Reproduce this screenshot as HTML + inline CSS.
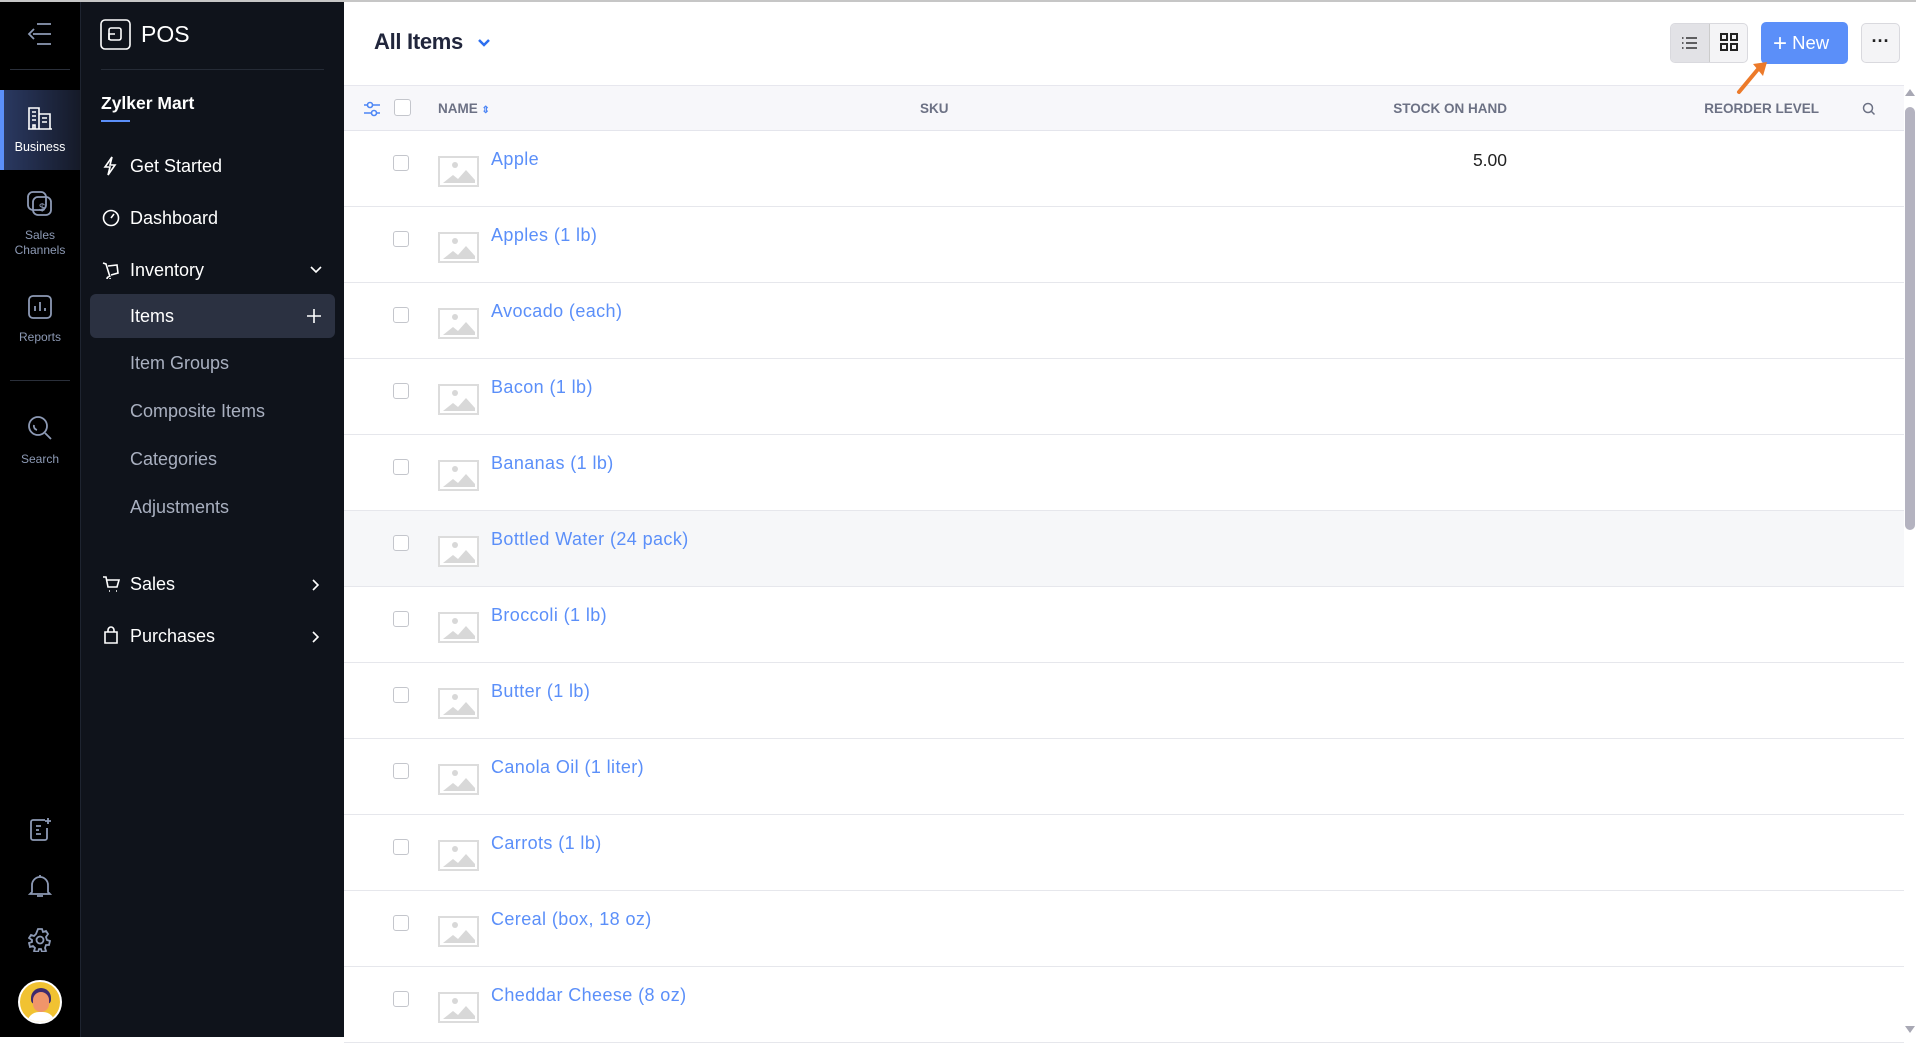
<!DOCTYPE html><html><head><style>
*{box-sizing:border-box;margin:0;padding:0}
body{width:1916px;height:1037px;overflow:hidden;font-family:"Liberation Sans",sans-serif;background:#fff;position:relative}
.a{position:absolute}
.rail{left:0;top:0;width:80px;height:1037px;background:#000}
.side{left:80px;top:0;width:264px;height:1037px;background:#0f131b;border-left:1px solid #1e2430}
.rl{color:#8d9ab5;font-size:12px;text-align:center;width:80px;left:0;line-height:15px}
.nav{left:130px;color:#fff;font-size:18px}
.sub{left:130px;color:#a9b0c0;font-size:18px}
.ic{stroke:#fff;fill:none;stroke-width:1.6}
.ri{stroke:#8d9ab5;fill:none;stroke-width:1.8}
.th{top:101px;font-size:13.5px;font-weight:bold;color:#6c7184}
.row{left:344px;width:1560px;height:76px;border-bottom:1px solid #e6e7ec}
.cb{left:49px;top:24px;width:16px;height:16px;border:1.3px solid #c4c6cc;border-radius:3px;background:#fff}
.img{left:94px;top:25px}
.nm{left:147px;top:18px;color:#5b8ff9;font-size:18px;letter-spacing:0.4px}
</style></head><body>
<div class="a" style="left:0;top:0;width:1916px;height:2px;background:#c6c6c6;z-index:5"></div>
<div class="a rail"></div>
<svg class="a" style="left:27px;top:22px" width="26" height="24" viewBox="0 0 26 24"><path class="ri" d="M10 2h14M6 12h18M10 22h14M7 7l-5 5 5 5" stroke="#aab4c8"/></svg>
<div class="a" style="left:10px;top:69px;width:60px;height:1px;background:#2a2f3a"></div>
<div class="a" style="left:0;top:90px;width:80px;height:80px;background:linear-gradient(90deg,#2b3a64,#151a28)"></div>
<div class="a" style="left:0;top:90px;width:4px;height:80px;background:#5b8ff9"></div>
<svg class="a" style="left:27px;top:105px" width="26" height="26" viewBox="0 0 26 26"><path class="ic" d="M2 24V3h10v21M12 9h11v15M1 24h24M5 7h4M5 11h4M5 15h4M15 13h5M15 17h5M6 24v-4h2v4"/></svg>
<div class="a rl" style="top:140px;color:#fff;font-size:12.5px">Business</div>
<svg class="a" style="left:27px;top:191px" width="26" height="28" viewBox="0 0 26 28"><rect class="ri" x="1" y="1" width="18" height="18" rx="5"/><rect class="ri" x="6" y="6" width="18" height="18" rx="5" fill="#000"/><text x="15" y="20" font-size="11" fill="#8d9ab5" text-anchor="middle" font-family="Liberation Sans">$</text></svg>
<div class="a rl" style="top:228px">Sales<br>Channels</div>
<svg class="a" style="left:28px;top:295px" width="24" height="24" viewBox="0 0 24 24"><rect class="ri" x="1" y="1" width="22" height="22" rx="4"/><path class="ri" d="M7 16v-5M12 16V7M17 16v-3"/></svg>
<div class="a rl" style="top:330px">Reports</div>
<div class="a" style="left:10px;top:380px;width:60px;height:1px;background:#2a2f3a"></div>
<svg class="a" style="left:27px;top:415px" width="26" height="26" viewBox="0 0 26 26"><circle class="ri" cx="11" cy="11" r="9"/><path class="ri" d="M18 18l6 6M7 10a4 4 0 0 0 3 5"/></svg>
<div class="a rl" style="top:452px">Search</div>
<svg class="a" style="left:29px;top:816px" width="24" height="26" viewBox="0 0 24 26"><path class="ri" d="M16 4H4a2 2 0 0 0-2 2v16a2 2 0 0 0 2 2h12a2 2 0 0 0 2-2V12M7 10h5M7 14h3M7 18h5M19 2v6M16 5h6"/></svg>
<svg class="a" style="left:28px;top:873px" width="24" height="26" viewBox="0 0 24 26"><path class="ri" d="M4 19V12a8 8 0 0 1 16 0v7l2 2H2zM12 2v2M9 23h6"/></svg>
<svg class="a" style="left:28px;top:928px" width="24" height="24" viewBox="0 0 24 24"><circle class="ri" cx="12" cy="12" r="3.5"/><path class="ri" d="M10 1h4l1 3 3-1 2 3-2 3 1 3 3 1v0l-1 4-3 0-1 3 1 3-4 1-1-3h-2l-1 3-4-1 1-3-2-2-3 1-1-4 3-1v-2l-3-2 2-3 3 1 2-2z"/></svg>
<div class="a" style="left:18px;top:980px;width:44px;height:44px;border-radius:50%;background:#f1c232;border:2px solid #fff;overflow:hidden">
<div class="a" style="left:11px;top:6px;width:20px;height:16px;border-radius:10px 10px 4px 4px;background:#3e2a6e"></div>
<div class="a" style="left:13px;top:10px;width:16px;height:20px;border-radius:8px;background:#f0956a"></div>
<div class="a" style="left:7px;top:30px;width:28px;height:14px;border-radius:12px 12px 0 0;background:#fff"></div></div>

<div class="a side"></div>
<svg class="a" style="left:100px;top:19px" width="32" height="32" viewBox="0 0 32 32"><rect class="ic" x="1" y="1" width="29" height="29" rx="4"/><rect class="ic" x="9" y="9" width="12" height="12" rx="2"/><path class="ic" d="M15 15h-6v6"/></svg>
<div class="a" style="left:141px;top:21px;color:#fff;font-size:23px">POS</div>
<div class="a" style="left:101px;top:69px;width:223px;height:1px;background:#252b36"></div>
<div class="a" style="left:101px;top:93px;color:#fff;font-size:17.5px;font-weight:bold">Zylker Mart</div>
<div class="a" style="left:101px;top:120px;width:29px;height:2px;background:#5b8ff9"></div>
<svg class="a" style="left:103px;top:156px" width="14" height="20" viewBox="0 0 14 20"><path class="ic" d="M9 1L2 11h5l-2 8 7-10H7z"/></svg>
<div class="a nav" style="top:156px">Get Started</div>
<svg class="a" style="left:102px;top:209px" width="18" height="18" viewBox="0 0 18 18"><circle class="ic" cx="9" cy="9" r="7.5"/><path class="ic" d="M9 9l3-4"/></svg>
<div class="a nav" style="top:208px">Dashboard</div>
<svg class="a" style="left:102px;top:261px" width="18" height="18" viewBox="0 0 18 18"><path class="ic" d="M1 2l3 1 4 13M6 5l9-1 1 8-7 2M7 16a1.5 1.5 0 1 0 1 1"/></svg>
<div class="a nav" style="top:260px">Inventory</div>
<svg class="a" style="left:309px;top:265px" width="14" height="10" viewBox="0 0 14 10"><path class="ic" d="M2 2l5 5 5-5"/></svg>
<div class="a" style="left:90px;top:294px;width:245px;height:44px;background:#2b3141;border-radius:6px"></div>
<div class="a nav" style="top:306px">Items</div>
<svg class="a" style="left:306px;top:308px" width="16" height="16" viewBox="0 0 16 16"><path class="ic" d="M8 1v14M1 8h14"/></svg>
<div class="a sub" style="top:353px">Item Groups</div>
<div class="a sub" style="top:401px">Composite Items</div>
<div class="a sub" style="top:449px">Categories</div>
<div class="a sub" style="top:497px">Adjustments</div>
<svg class="a" style="left:102px;top:575px" width="18" height="18" viewBox="0 0 18 18"><path class="ic" d="M1 2h3l2 10h9l2-7H5M7 16h1M14 16h1"/></svg>
<div class="a nav" style="top:574px">Sales</div>
<svg class="a" style="left:311px;top:578px" width="10" height="14" viewBox="0 0 10 14"><path class="ic" d="M2 2l5 5-5 5"/></svg>
<svg class="a" style="left:103px;top:626px" width="16" height="18" viewBox="0 0 16 18"><path class="ic" d="M2 6h12v11H2zM5 6V4a3 3 0 0 1 6 0v2"/></svg>
<div class="a nav" style="top:626px">Purchases</div>
<svg class="a" style="left:311px;top:630px" width="10" height="14" viewBox="0 0 10 14"><path class="ic" d="M2 2l5 5-5 5"/></svg>

<div class="a" style="left:374px;top:29px;font-size:22px;color:#21263c;font-weight:bold;letter-spacing:-0.3px">All Items</div>
<svg class="a" style="left:477px;top:38px" width="14" height="10" viewBox="0 0 14 10"><path d="M2 2l5 5 5-5" stroke="#2d6ff0" stroke-width="2.5" fill="none"/></svg>
<div class="a" style="left:1670px;top:23px;width:78px;height:40px;border:1px solid #d9d9de;border-radius:5px;background:#f4f4f6;overflow:hidden"><div class="a" style="left:0;top:0;width:39px;height:40px;background:#e2e2e6;border-right:1px solid #ccc"></div></div>
<svg class="a" style="left:1681px;top:35px" width="18" height="16" viewBox="0 0 18 16"><path d="M5 3h11M5 8h11M5 13h11M1 3h1.5M1 8h1.5M1 13h1.5" stroke="#333" stroke-width="1.5"/></svg>
<svg class="a" style="left:1720px;top:33px" width="18" height="18" viewBox="0 0 18 18"><g fill="none" stroke="#222" stroke-width="2"><rect x="1" y="1" width="6" height="6"/><rect x="11" y="1" width="6" height="6"/><rect x="1" y="11" width="6" height="6"/><rect x="11" y="11" width="6" height="6"/></g></svg>
<div class="a" style="left:1761px;top:22px;width:87px;height:42px;background:#5b8ff9;border-radius:5px;color:#fff;font-size:18.5px;line-height:42px;padding-left:12px"><span style="font-size:24px;font-weight:300;vertical-align:-2px">+</span> New</div>
<div class="a" style="left:1861px;top:23px;width:39px;height:40px;border:1px solid #d9d9de;border-radius:5px;background:#f4f4f6;text-align:center;line-height:34px;font-size:18px;font-weight:bold;color:#222">···</div>

<div class="a" style="left:344px;top:85px;width:1560px;height:46px;background:#f7f7fa;border-top:1px solid #e7e7ee;border-bottom:1px solid #e4e5ec"></div>
<svg class="a" style="left:1735px;top:58px;z-index:4" width="36" height="38" viewBox="0 0 36 38"><path d="M4 34L24 10" stroke="#ec7a2a" stroke-width="4" stroke-linecap="round"/><path d="M18 6l14-2-4 14z" fill="#ec7a2a"/></svg>
<svg class="a" style="left:363px;top:101px" width="18" height="16" viewBox="0 0 18 16"><g stroke="#4d86f5" stroke-width="1.6" fill="#fff"><path d="M1 4h16M1 12h16"/><circle cx="7" cy="4" r="2.5"/><circle cx="11" cy="12" r="2.5"/></g></svg>
<div class="a" style="left:394px;top:99px;width:17px;height:17px;border:1.3px solid #c4c6cc;border-radius:3px;background:#fff"></div>
<div class="a th" style="left:438px">NAME <span style="color:#4d86f5;font-size:10px">&#8661;</span></div>
<div class="a th" style="left:920px">SKU</div>
<div class="a th" style="left:1300px;width:207px;text-align:right">STOCK ON HAND</div>
<div class="a th" style="left:1600px;width:219px;text-align:right">REORDER LEVEL</div>
<svg class="a" style="left:1862px;top:102px" width="14" height="14" viewBox="0 0 14 14"><circle cx="6" cy="6" r="4.5" stroke="#6c7184" stroke-width="1.5" fill="none"/><path d="M9.5 9.5l3 3" stroke="#6c7184" stroke-width="1.5"/></svg>

<div id="rows"></div>
<div class="a" style="left:1904px;top:85px;width:12px;height:952px;background:#fff"></div>
<svg class="a" style="left:1905px;top:88px" width="10" height="8"><path d="M0 8L5 1 10 8z" fill="#a8a8b4"/></svg>
<div class="a" style="left:1905px;top:107px;width:10px;height:423px;background:#b4b3c0;border-radius:5px"></div>
<svg class="a" style="left:1905px;top:1026px" width="10" height="8"><path d="M0 0L5 7 10 0z" fill="#a8a8b4"/></svg>
<script>
var n=["Apple","Apples (1 lb)","Avocado (each)","Bacon (1 lb)","Bananas (1 lb)","Bottled Water (24 pack)","Broccoli (1 lb)","Butter (1 lb)","Canola Oil (1 liter)","Carrots (1 lb)","Cereal (box, 18 oz)","Cheddar Cheese (8 oz)"];
var h="";n.forEach(function(t,i){var y=131+i*76;
h+='<div class="a row" style="top:'+y+'px;'+(i==5?'background:#f6f7f9':'')+'"><div class="a cb"></div><svg class="a img" width="41" height="31" viewBox="0 0 41 31"><rect x="1" y="1" width="39" height="29" fill="#fff" stroke="#dcdcdc" stroke-width="2"/><circle cx="17" cy="9" r="3" fill="#d8d8d8"/><path d="M5 27l10-8 5 4 8-9 9 10v3H5z" fill="#d8d8d8"/></svg><div class="a nm">'+t+'</div>'+(i==0?'<div class="a" style="left:1000px;width:163px;text-align:right;top:19px;font-size:17.5px;color:#222">5.00</div>':'')+'</div>';});
document.getElementById("rows").innerHTML=h;
</script>
</body></html>
